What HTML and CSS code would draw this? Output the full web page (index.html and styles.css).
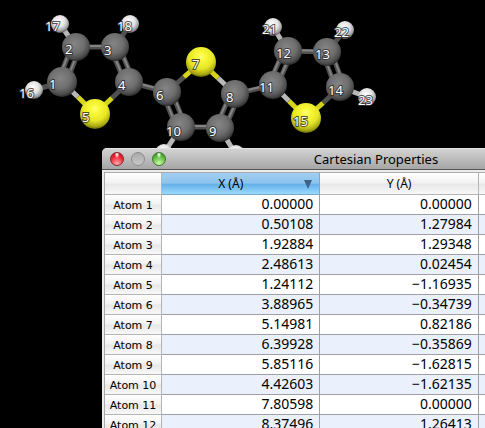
FILE: index.html
```
<!DOCTYPE html>
<html lang="en">
<head>
<meta charset="utf-8">
<title>Cartesian Properties</title>
<link rel="stylesheet" href="styles.css">
</head>
<body>
<svg class="molecule" width="485" height="170" viewBox="0 0 485 170" role="img" aria-label="Molecule with numbered atoms">
  <defs>
    <radialGradient id="carbon" cx=".45" cy=".38" r=".62"><stop offset="0" stop-color="#858585"/><stop offset=".55" stop-color="#6e6e6e"/><stop offset=".85" stop-color="#4c4c4c"/><stop offset="1" stop-color="#2c2c2c"/></radialGradient>
    <radialGradient id="sulfur" cx=".5" cy=".32" r=".68"><stop offset="0" stop-color="#ffff80"/><stop offset=".2" stop-color="#fafa3a"/><stop offset=".6" stop-color="#e6e626"/><stop offset=".88" stop-color="#a5a512"/><stop offset="1" stop-color="#606005"/></radialGradient>
    <radialGradient id="hydrogen" cx=".45" cy=".35" r=".65"><stop offset="0" stop-color="#fff"/><stop offset=".5" stop-color="#e2e2e2"/><stop offset=".85" stop-color="#999"/><stop offset="1" stop-color="#555"/></radialGradient>
  </defs>
  <g class="bond dark">
    <path d="M76 47H115M129 82L167 92M235 94L273 85M181 127H220M288 51L327 52"/>
    <path d="M58 81L72 46M66 83L80 48M111 49L125 83M119 46L133 80M163 94L177 129M171 90L185 125M231 93L216 127M239 96L224 130M269 84L284 50M277 86L292 52M323 54L336 89M331 51L344 86"/>
    <path d="M129 82L112 98M167 92L184 77M340 87L323 103"/>
    <path d="M34 90L62 82M115 47L130 24M327 52L345 30"/>
  </g>
  <g class="bond core">
    <path d="M76 46H115M129 81L167 91M235 93L273 84M181 126H220M288 50L327 51"/>
    <path d="M58 80L72 45M66 82L80 47M111 48L125 82M119 46L133 79M163 93L177 128M171 89L185 124M231 92L216 126M239 95L224 129M269 83L284 49M277 85L292 51M323 53L336 88M331 50L344 85"/>
  </g>
  <path class="bond bright" d="M62 82L78 97M235 94L218 78M273 85L289 101M60 24L76 47M273 27L288 51M340 87L367 97M181 127L164 153M220 128L236 155"/>
  <path class="bond yellow" d="M95 114L78 97M95 114L112 98M201 62L184 77M201 62L218 78M306 118L289 101M306 118L323 103"/>
  <g fill="url(#hydrogen)">
    <circle cx="34" cy="90" r="9"/><circle cx="60" cy="24" r="9"/><circle cx="130" cy="24" r="9"/>
    <circle cx="273" cy="27" r="9"/><circle cx="345" cy="30" r="9"/><circle cx="367" cy="97" r="9"/>
    <circle cx="164" cy="153" r="9"/><circle cx="236" cy="154" r="9"/>
  </g>
  <g fill="url(#carbon)">
    <circle cx="62" cy="82" r="15"/><circle cx="76" cy="47" r="14"/><circle cx="115" cy="47" r="14"/><circle cx="129" cy="82" r="14"/>
    <circle cx="167" cy="92" r="14"/><circle cx="235" cy="94" r="14"/><circle cx="220" cy="128" r="14"/><circle cx="181" cy="127" r="14"/>
    <circle cx="273" cy="85" r="14"/><circle cx="288" cy="51" r="14"/><circle cx="327" cy="52" r="14"/><circle cx="340" cy="87" r="14"/>
  </g>
  <g fill="url(#sulfur)"><circle cx="95" cy="114" r="15"/><circle cx="201" cy="62" r="15"/><circle cx="306" cy="118" r="15"/></g>
  <g class="atom-label">
    <text x="49" y="89">1</text><text x="65" y="54">2</text><text x="104" y="55">3</text><text x="118" y="90">4</text>
    <text x="82" y="122">5</text><text x="156" y="100">6</text><text x="192" y="69">7</text><text x="226" y="102">8</text>
    <text x="209" y="136">9</text><text x="166" y="136">10</text><text x="259" y="92">11</text><text x="276" y="58">12</text>
    <text x="315" y="59">13</text><text x="328" y="95">14</text><text x="293" y="126">15</text><text x="19" y="98">16</text>
    <text x="45" y="31">17</text><text x="117" y="31">18</text><text x="262" y="34">21</text><text x="334" y="37">22</text>
    <text x="358" y="105">23</text>
  </g>
</svg>
<main class="window">
  <header class="titlebar">
    <div class="controls">
      <button class="light red" aria-label="Close"></button>
      <button class="light gray" aria-label="Minimize"></button>
      <button class="light green" aria-label="Zoom"></button>
    </div>
    <h1>Cartesian Properties</h1>
  </header>
  <table>
    <colgroup><col class="name"><col class="coord"><col class="coord"><col class="coord"></colgroup>
    <thead>
      <tr><th></th><th class="sorted" aria-sort="descending">X (Å)<svg class="arrow" width="8" height="9" viewBox="0 0 8 9" aria-hidden="true"><path d="M0 0H8L4 9Z"/></svg></th><th>Y (Å)</th><th></th></tr>
    </thead>
    <tbody>
      <tr><th>Atom 1</th><td>0.00000</td><td>0.00000</td><td></td></tr>
      <tr><th>Atom 2</th><td>0.50108</td><td>1.27984</td><td></td></tr>
      <tr><th>Atom 3</th><td>1.92884</td><td>1.29348</td><td></td></tr>
      <tr><th>Atom 4</th><td>2.48613</td><td>0.02454</td><td></td></tr>
      <tr><th>Atom 5</th><td>1.24112</td><td>−1.16935</td><td></td></tr>
      <tr><th>Atom 6</th><td>3.88965</td><td>−0.34739</td><td></td></tr>
      <tr><th>Atom 7</th><td>5.14981</td><td>0.82186</td><td></td></tr>
      <tr><th>Atom 8</th><td>6.39928</td><td>−0.35869</td><td></td></tr>
      <tr><th>Atom 9</th><td>5.85116</td><td>−1.62815</td><td></td></tr>
      <tr><th>Atom 10</th><td>4.42603</td><td>−1.62135</td><td></td></tr>
      <tr><th>Atom 11</th><td>7.80598</td><td>0.00000</td><td></td></tr>
      <tr><th>Atom 12</th><td>8.37496</td><td>1.26413</td><td></td></tr>
    </tbody>
  </table>
</main>
</body>
</html>
```
FILE: styles.css
```
* { box-sizing: border-box; }
body {
  margin: 0;
  height: 100vh;
  overflow: hidden;
  background: #000;
  color: #000;
  font-family: "Noto Sans", sans-serif;
}
.molecule { position: absolute; top: 0; left: 0; }
.bond { fill: none; stroke-width: 5; }
.dark { stroke: #505050; }
.core { stroke: #848484; stroke-width: 2; }
.bright { stroke: #b8b8b8; }
.yellow { stroke: #d4d41c; }
.atom-label text {
  font-size: 13px;
  fill: #fff;
  stroke: rgb(40 40 40 / 80%);
  stroke-width: 2px;
  paint-order: stroke;
}
.window {
  position: absolute;
  top: 148px;
  left: 102px;
  width: 548px;
  padding-bottom: 16px;
  background: #ececec;
  border-radius: 5px 5px 0 0;
  overflow: hidden;
}
.titlebar {
  display: grid;
  grid-template-columns: 80px 1fr 80px;
  align-items: center;
  height: 22px;
  background: linear-gradient(#d2d2d2, #a6a6a6);
  border-top: 1px solid #e2e2e2;
  border-bottom: 1px solid #555;
}
.controls { display: flex; gap: 7px; padding-left: 8px; }
.light {
  width: 14px;
  height: 14px;
  padding: 0;
  border: 1px solid #777;
  border-radius: 50%;
}
.red { border-color: #85272b; background: radial-gradient(ellipse at 50% 12%, #ffe4e4 0 5%, transparent 28%), radial-gradient(circle at 50% 90%, #ffb0b0, #f02a3a 55%, #b81020); }
.gray { border-color: #8c8c8c; background: linear-gradient(#aaa, #c8c8c8); }
.green { border-color: #3f7430; background: radial-gradient(ellipse at 50% 12%, #ecffe4 0 5%, transparent 28%), radial-gradient(circle at 50% 90%, #d0ffa8, #66c048 55%, #2d7d20); }
h1 {
  margin: 0;
  text-align: center;
  font-size: 13px;
  font-weight: 400;
  line-height: 20px;
}
table {
  width: 533px;
  margin: 2px 0 0 2px;
  table-layout: fixed;
  border-collapse: separate;
  border-spacing: 0;
  border-top: 1px solid #aaa;
  border-left: 1px solid #aaa;
}
.name { width: 57px; }
.coord { width: 158px; }
th, td {
  height: 20px;
  padding: 0;
  border-right: 1px solid #a0a0a4;
  border-bottom: 1px solid #a0a0a4;
}
th {
  font-family: "DejaVu Sans", sans-serif;
  font-size: 11px;
  font-weight: 400;
  line-height: 19px;
  border-color: #b5b5b5;
  background: linear-gradient(#fff, #f2f2f2 48%, #e7e7e7 52%, #f8f8f8);
}
tbody th { padding-top: 2px; line-height: 17px; }
thead th {
  height: 22px;
  font-family: "Noto Sans", sans-serif;
  font-size: 12px;
}
thead .sorted {
  position: relative;
  padding-right: 20px;
  border-color: #79a8cf;
  background: linear-gradient(#a2cef0, #8bc3ef 48%, #65b0ea 54%, #9adbff);
}
.arrow { position: absolute; top: 7px; right: 7px; fill: #416383; }
td {
  padding: 0 6px 2px 0;
  background: #fff;
  font-size: 14px;
  line-height: 17px;
  text-align: right;
}
tbody tr:nth-child(even) td { background: #eaf1fd; }
```
